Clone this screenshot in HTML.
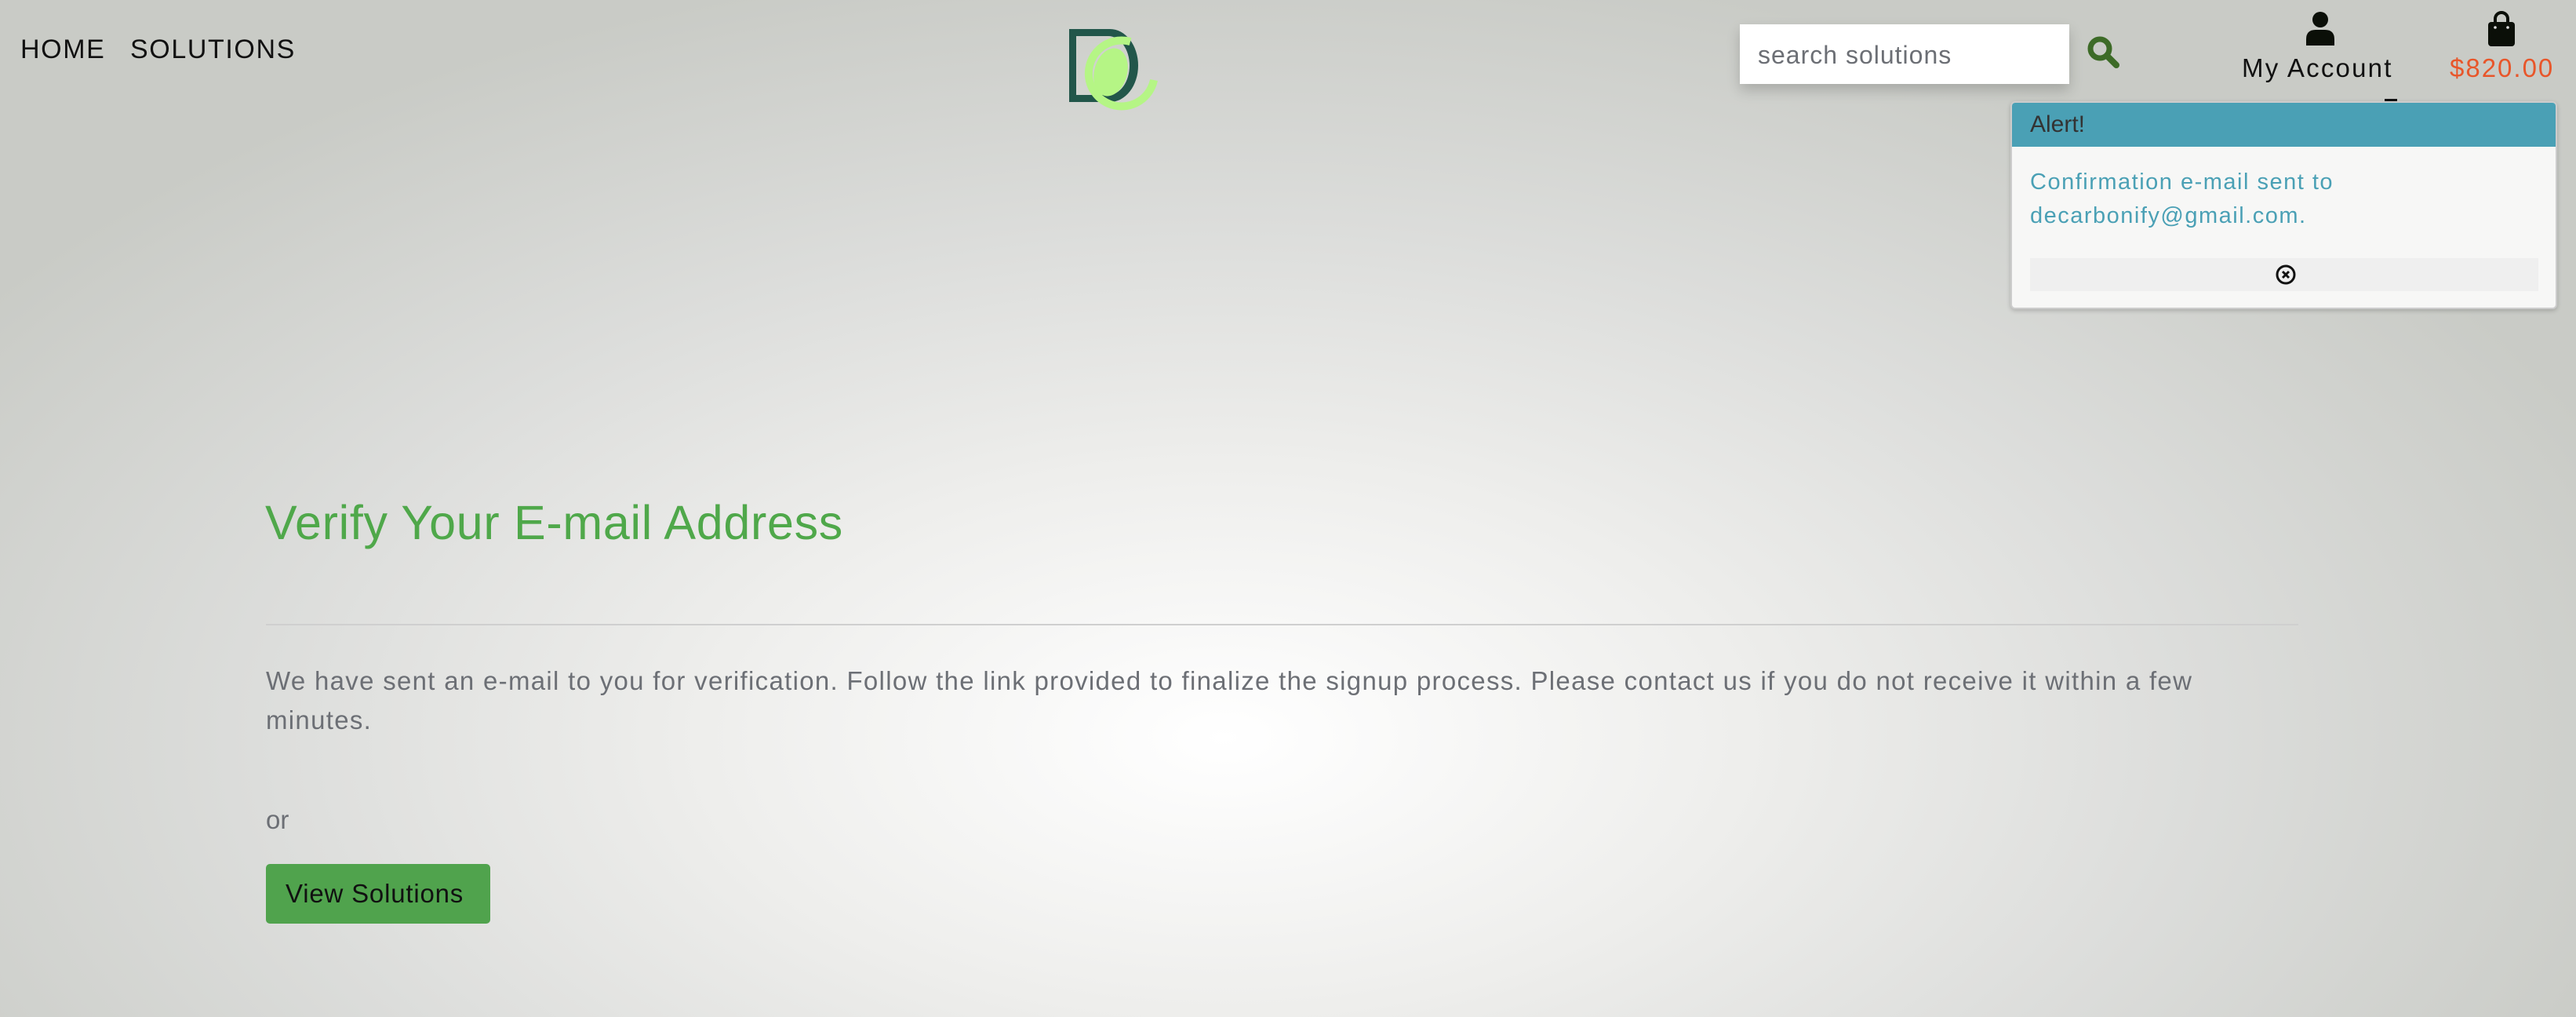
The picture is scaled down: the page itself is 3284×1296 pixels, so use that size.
<!DOCTYPE html>
<html><head><meta charset="utf-8">
<style>
*{margin:0;padding:0;box-sizing:border-box}
html,body{width:3284px;height:1296px;overflow:hidden}
body{font-family:"Liberation Sans",sans-serif;position:relative;
background:radial-gradient(ellipse 1900px 1000px at 1560px 940px,#ffffff 0%,#eeeeec 35%,#dcdddb 65%,#c9cbc6 100%);}
.a{position:absolute;white-space:nowrap}
.nav{font-size:34px;color:#111;letter-spacing:1.6px;top:44px}
</style></head><body>
<div class="a nav" style="left:26px">HOME</div>
<div class="a nav" style="left:166px">SOLUTIONS</div>

<svg class="a" style="left:1355px;top:30px" width="130" height="115" viewBox="0 0 130 115">
<path d="M8 7 H60 A36 46.5 0 0 1 60 100 H8 Z M17 16 V91 H58 A27 37.5 0 0 0 58 16 Z" fill="#22564a" fill-rule="evenodd"/>
<ellipse cx="61" cy="62" rx="21" ry="31" transform="rotate(15 61 62)" fill="#b5f585"/>
<path d="M86 23 A42 42 0 1 0 116 72" fill="none" stroke="#b5f585" stroke-width="10"/>
</svg>

<div class="a" style="left:2218px;top:31px;width:420px;height:76px;background:#fff;box-shadow:0 8px 16px rgba(0,0,0,.18)"></div>
<div class="a" style="left:2241px;top:52px;font-size:32px;color:#6c6f75;letter-spacing:1px">search solutions</div>
<svg class="a" style="left:2660px;top:45px" width="44" height="44" viewBox="0 0 44 44">
<circle cx="17" cy="17" r="12" fill="none" stroke="#3d6b27" stroke-width="7"/>
<line x1="27" y1="27" x2="38" y2="38" stroke="#3d6b27" stroke-width="8" stroke-linecap="round"/>
</svg>

<svg class="a" style="left:2938px;top:14px" width="40" height="46" viewBox="0 0 40 46">
<circle cx="20" cy="11" r="10" fill="#0b0f08"/>
<path d="M2 44 V36 Q2 24 14 24 H26 Q38 24 38 36 V44 Z" fill="#0b0f08"/>
</svg>
<div class="a" style="left:2858px;top:68px;font-size:33px;color:#111;letter-spacing:2.2px">My Account</div>
<svg class="a" style="left:3170px;top:14px" width="38" height="46" viewBox="0 0 38 46">
<path d="M11 16 V10 A8 8 0 0 1 27 10 V16" fill="none" stroke="#0b0f08" stroke-width="4"/>
<rect x="2" y="14" width="34" height="31" rx="4" fill="#0b0f08"/>
<circle cx="11" cy="21" r="1.8" fill="#ddd"/><circle cx="27" cy="21" r="1.8" fill="#ddd"/>
</svg>
<div class="a" style="left:3123px;top:68px;font-size:33px;color:#e8562a;letter-spacing:2px">$820.00</div>
<div class="a" style="left:3040px;top:126px;width:16px;height:4px;background:#111"></div>

<div class="a" style="left:2563px;top:129px;width:697px;height:265px;background:#f7f7f6;border:2px solid #ccc;border-radius:6px;box-shadow:0 2px 6px rgba(0,0,0,.2);overflow:hidden">
<div style="height:56px;background:#4aa0b5;color:#333;font-size:30px;padding:11px 0 0 23px">Alert!</div>
<div style="color:#4aa0b5;font-size:29px;line-height:43px;padding:24px 0 0 23px;letter-spacing:1.5px">Confirmation e-mail sent to<br>decarbonify@gmail.com.</div>
<div style="position:absolute;left:23px;top:198px;width:648px;height:42px;background:#efefef"></div>
<svg style="position:absolute;left:335px;top:205px" width="28" height="28" viewBox="0 0 28 28">
<circle cx="14" cy="14" r="11" fill="none" stroke="#111" stroke-width="3"/>
<path d="M10 10 L18 18 M18 10 L10 18" stroke="#111" stroke-width="3"/>
</svg>
</div>

<div class="a" style="left:338px;top:631px;font-size:61px;color:#4fa84a;letter-spacing:.7px">Verify Your E-mail Address</div>
<div class="a" style="left:339px;top:795px;width:2591px;height:2px;background:#cfcfcf"></div>
<div class="a" style="left:339px;top:843px;font-size:33px;line-height:50px;color:#6c6f75;letter-spacing:1.3px">We have sent an e-mail to you for verification. Follow the link provided to finalize the signup process. Please contact us if you do not receive it within a few<br>minutes.</div>
<div class="a" style="left:339px;top:1026px;font-size:33px;color:#6c6f75">or</div>
<div class="a" style="left:339px;top:1101px;width:286px;height:76px;background:#50a34d;border-radius:5px;color:#111;font-size:33px;line-height:76px;padding-left:25px;letter-spacing:.8px">View Solutions</div>
</body></html>
